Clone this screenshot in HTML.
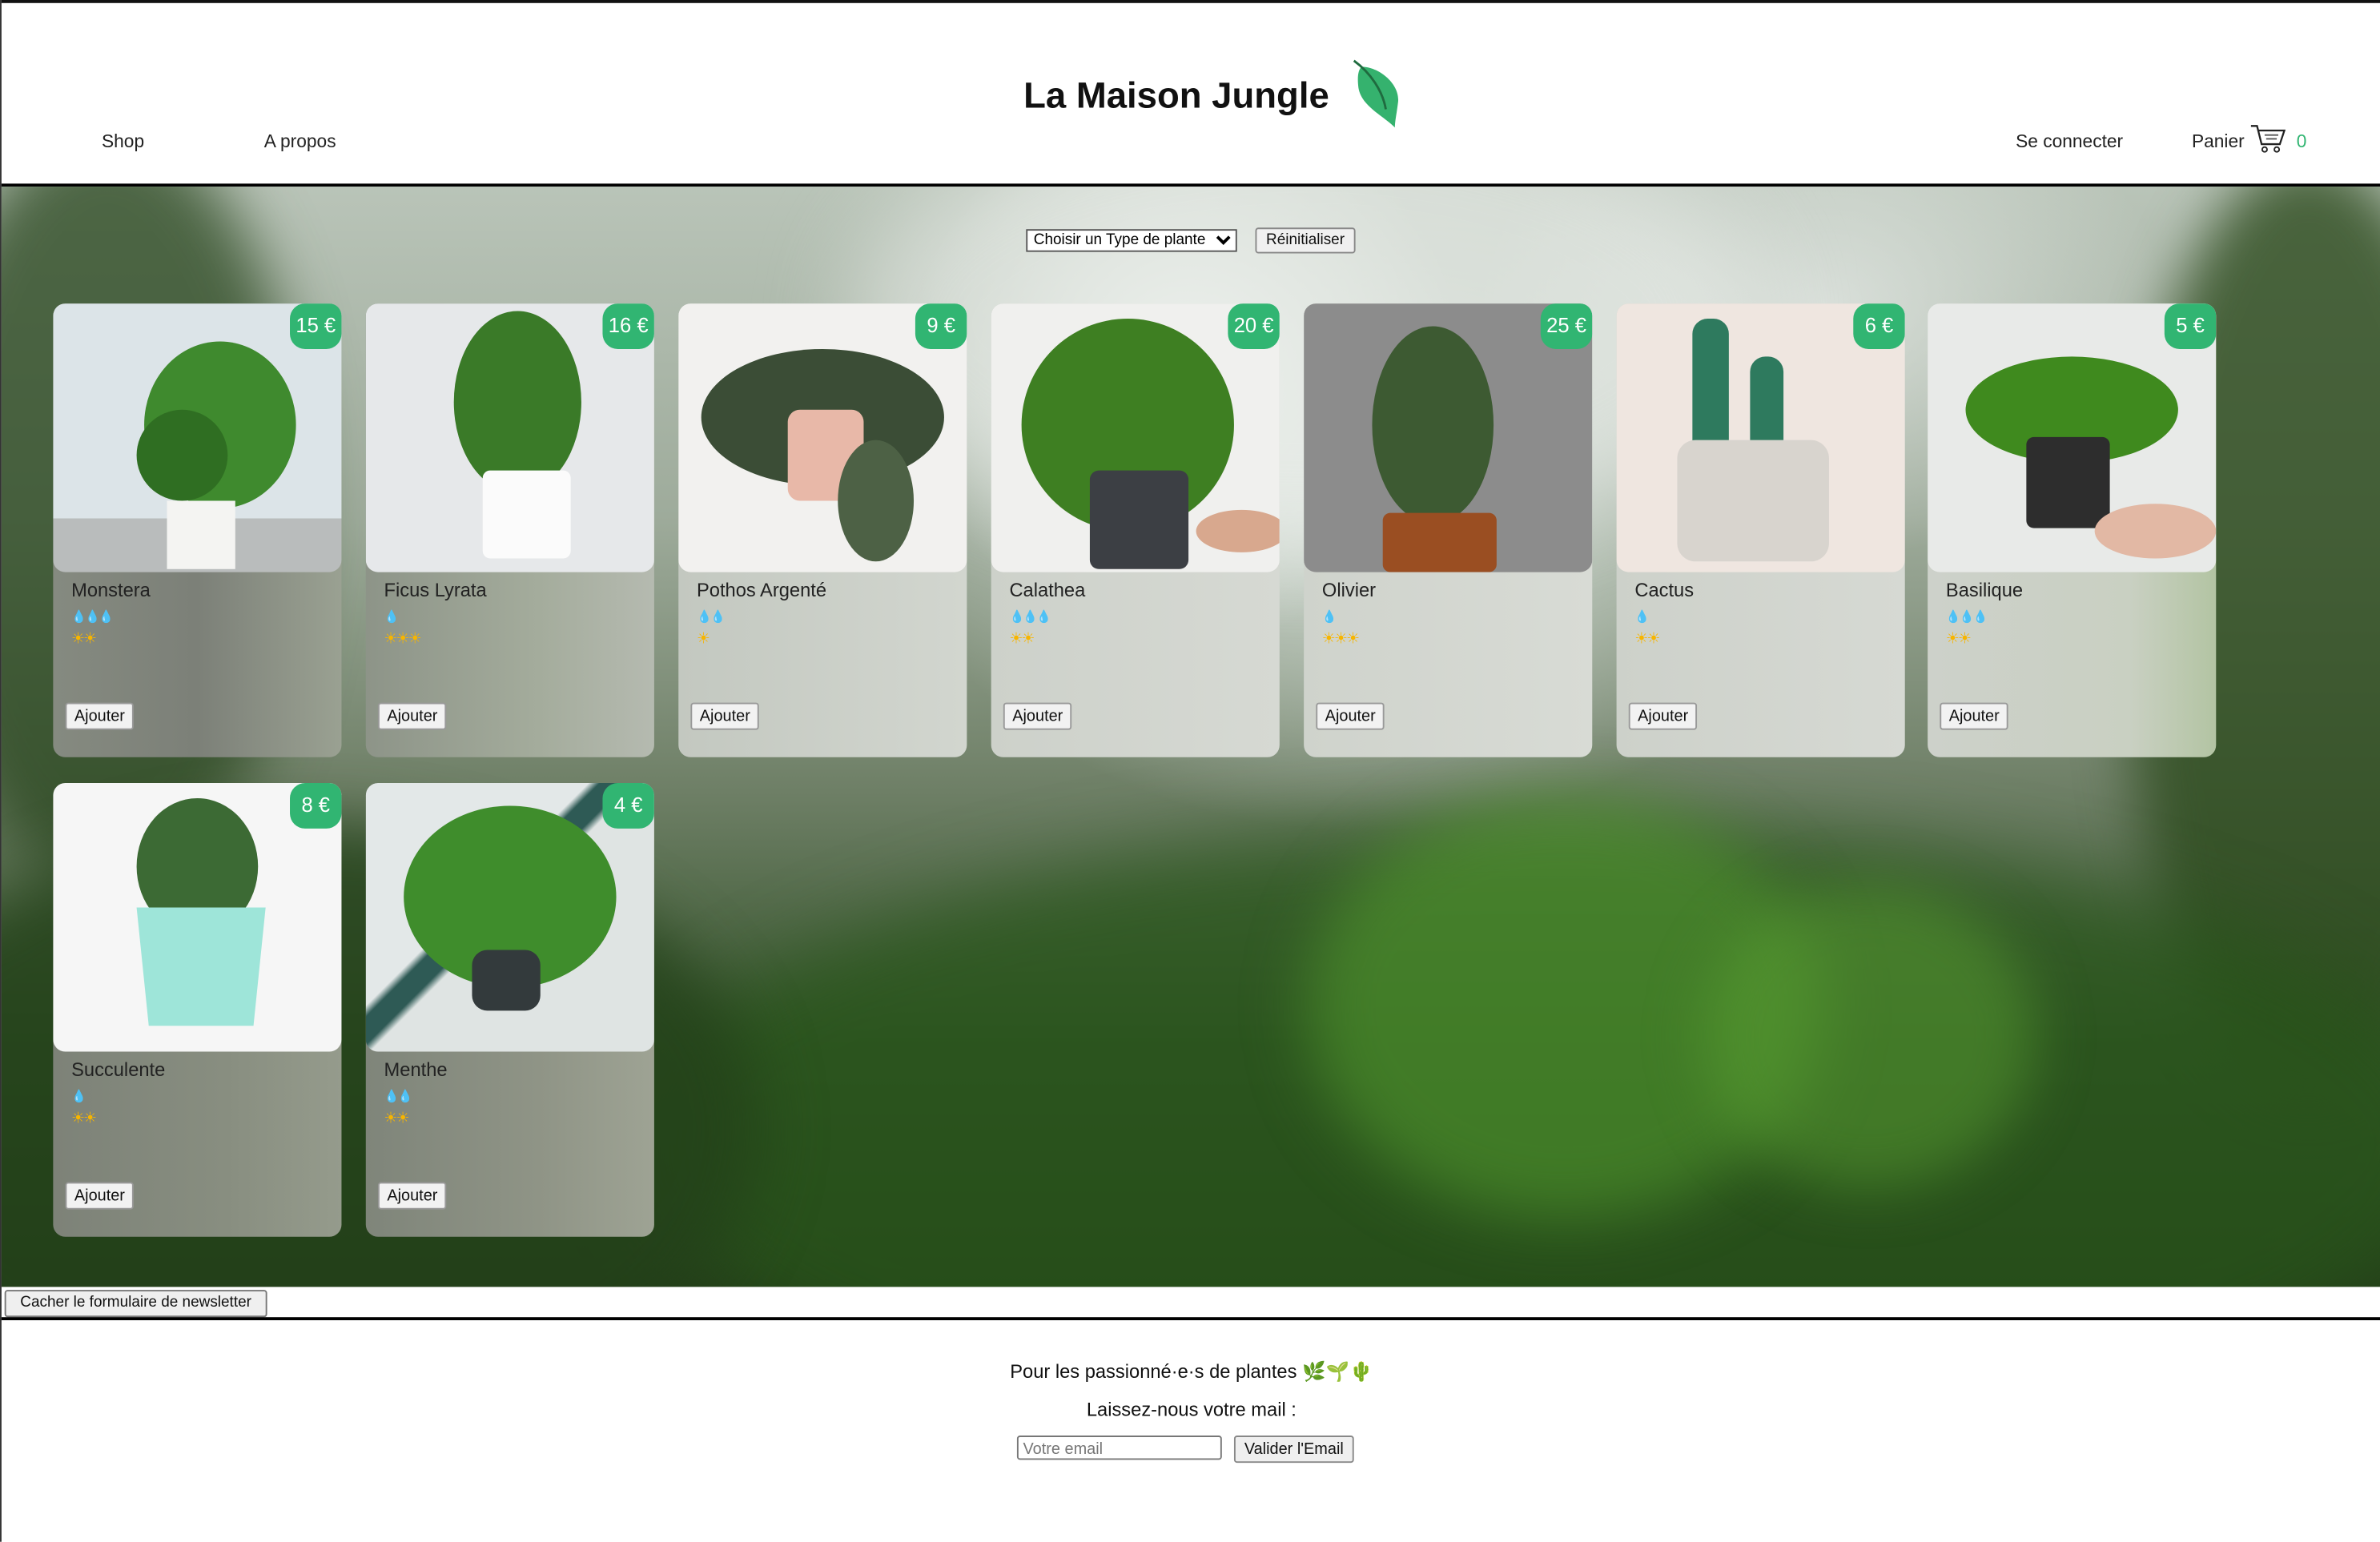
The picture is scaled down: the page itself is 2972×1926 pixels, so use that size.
<!DOCTYPE html>
<html><head><meta charset="utf-8">
<style>
html,body{margin:0;padding:0;width:2972px;height:1925px;overflow:hidden;background:#fff}
#w{position:absolute;left:0;top:0;width:1568px;height:1016px;transform:scale(1.8954);transform-origin:0 0;font-family:"Liberation Sans","DejaVu Sans",sans-serif;background:#fff;border-left:1px solid #333;box-sizing:border-box}
.abs{position:absolute}
#topline{left:0;top:0;width:1568px;height:2px;background:#111}
#title{left:0;width:1548px;top:50px;text-align:center;font-weight:bold;font-size:24px;color:#111}
.nav{top:86px;font-size:12px;color:#222}
#hline{left:0;top:121px;width:1568px;height:2px;background:#000}
#jungle{left:0;top:123px;width:1568px;height:725px;overflow:hidden;
background:
radial-gradient(ellipse 260px 260px at 780px 120px, rgba(240,244,240,.95), rgba(220,228,222,0) 70%),
radial-gradient(ellipse 420px 300px at 900px 200px, rgba(220,228,222,.9), rgba(200,210,200,0) 75%),
radial-gradient(ellipse 300px 220px at 1200px 80px, rgba(225,230,226,.85), rgba(200,210,200,0) 75%),
linear-gradient(180deg,#b9c4b8 0%,#9eab9b 30%,#6e7f66 55%,#34532a 78%,#243d1a 100%);}
.blob{position:absolute;border-radius:50%}
.card{position:absolute;width:190px;height:299px;border-radius:8px;overflow:hidden}
.img{position:absolute;left:0;top:0;width:190px;height:177px;border-radius:8px;overflow:hidden}
.price{position:absolute;right:0;top:0;width:34px;height:30px;background:#31b572;border-radius:10px 8px 10px 10px;color:#fff;font-size:13.5px;text-align:center;line-height:30px}
.name{position:absolute;left:12px;top:182px;font-size:12.5px;color:#222}
.drops{position:absolute;left:12px;top:202px;font-size:8px;color:#4ba3dd;letter-spacing:-1px}
.suns{position:absolute;left:12px;top:216px;font-size:10px;color:#f7b500;letter-spacing:-1px}
.btn{position:absolute;left:8px;top:263px;height:16px;padding:0 5px;background:#f2f2f2;border:1px solid #999;border-radius:2px;font-size:10.5px;line-height:16px;color:#111}
</style></head><body><div id="w">
<div class="abs" id="topline"></div>
<div class="abs" id="title">La Maison Jungle</div>
<svg class="abs" style="left:888px;top:38px" width="36" height="48" viewBox="0 0 36 48"><path d="M8 6 C20 6 34 18 32 30 C31 38 30 42 30 46 C22 38 8 32 6 20 C5 12 6 8 8 6Z" fill="#35b26e"/><path d="M3 2 C14 10 22 22 24 34" stroke="#1f6b3f" stroke-width="1.5" fill="none"/></svg>
<div class="abs nav" style="left:66px">Shop</div>
<div class="abs nav" style="left:173px">A propos</div>
<div class="abs nav" style="left:1327px">Se connecter</div>
<div class="abs nav" style="left:1443px">Panier</div>
<svg class="abs" style="left:1481px;top:82px" width="26" height="20" viewBox="0 0 26 20"><path d="M1 1 H5 L8 13 H20 L23 4 H6" stroke="#222" stroke-width="1.2" fill="none"/><path d="M10 7 H19 M11 9.5 H18" stroke="#555" stroke-width="1"/><circle cx="10" cy="16.5" r="1.6" fill="none" stroke="#222"/><circle cx="18" cy="16.5" r="1.6" fill="none" stroke="#222"/></svg>
<div class="abs nav" style="left:1512px;color:#31b572">0</div>
<div class="abs" id="hline"></div>

<div class="abs" id="jungle">
 <div class="blob" style="left:-60px;top:-40px;width:260px;height:500px;background:rgba(40,70,30,.75);filter:blur(20px)"></div>
 <div class="blob" style="left:1400px;top:-20px;width:240px;height:620px;background:rgba(45,75,30,.8);filter:blur(18px)"></div>
 <div class="blob" style="left:420px;top:420px;width:1200px;height:420px;background:rgba(40,85,25,.7);filter:blur(25px)"></div>
 <div class="blob" style="left:860px;top:400px;width:340px;height:280px;background:rgba(80,150,45,.6);filter:blur(20px)"></div>
 <div class="blob" style="left:1120px;top:460px;width:220px;height:200px;background:rgba(90,160,50,.5);filter:blur(18px)"></div>
 <div class="blob" style="left:-100px;top:420px;width:600px;height:400px;background:rgba(35,65,25,.8);filter:blur(20px)"></div>
 <div class="blob" style="left:560px;top:-60px;width:600px;height:300px;background:rgba(235,238,235,.6);filter:blur(30px)"></div>
</div>

<select class="abs" style="left:675px;top:151px;width:139px;height:15px;font-size:10px;padding:0;font-family:'Liberation Sans',sans-serif;background:#fff;border:1px solid #555"><option>Choisir un Type de plante</option></select>
<div class="abs" style="left:826px;top:150px;width:64px;height:15px;background:#f0f0f0;border:1px solid #888;border-radius:2px;font-size:10px;line-height:15px;text-align:center;color:#111">Réinitialiser</div>

<div class="card" style="left:34px;top:200px;background:linear-gradient(90deg,#858a80,#7c8078 50%,#9aa192)">
 <div class="img" style="background:linear-gradient(#dce4e8 0 80%,#b9bcbc 80%)"><svg width="190" height="177"><ellipse cx="110" cy="80" rx="50" ry="55" fill="#3f8a2e"/><ellipse cx="85" cy="100" rx="30" ry="30" fill="#2f6e22"/><rect x="75" y="130" width="45" height="45" fill="#f4f4f2"/></svg></div>
 <div class="price">15 €</div><div class="name">Monstera</div><div class="drops">💧💧💧</div><div class="suns">☀☀</div><div class="btn">Ajouter</div></div>
<div class="card" style="left:240px;top:200px;background:linear-gradient(90deg,#8d9488,#a4ac9c 60%,#b5bab0)">
 <div class="img" style="background:#e6e8ea"><svg width="190" height="177"><ellipse cx="100" cy="65" rx="42" ry="60" fill="#3a7a28"/><rect x="77" y="110" width="58" height="58" rx="5" fill="#fbfbfb"/></svg></div>
 <div class="price">16 €</div><div class="name">Ficus Lyrata</div><div class="drops">💧</div><div class="suns">☀☀☀</div><div class="btn">Ajouter</div></div>
<div class="card" style="left:446px;top:200px;background:linear-gradient(90deg,#c3c8c0,#d2d6cf)">
 <div class="img" style="background:#f2f1ef"><svg width="190" height="177"><ellipse cx="95" cy="75" rx="80" ry="45" fill="#3b4d36"/><rect x="72" y="70" width="50" height="60" rx="8" fill="#e8b8a8"/><ellipse cx="130" cy="130" rx="25" ry="40" fill="#4d6145"/></svg></div>
 <div class="price">9 €</div><div class="name">Pothos Argenté</div><div class="drops">💧💧</div><div class="suns">☀</div><div class="btn">Ajouter</div></div>
<div class="card" style="left:652px;top:200px;background:linear-gradient(90deg,#cdd1ca,#d6d9d3)">
 <div class="img" style="background:#f0f0ee"><svg width="190" height="177"><ellipse cx="90" cy="80" rx="70" ry="70" fill="#3e7f22"/><rect x="65" y="110" width="65" height="65" rx="6" fill="#3c3f44"/><ellipse cx="165" cy="150" rx="30" ry="14" fill="#d8a88e"/></svg></div>
 <div class="price">20 €</div><div class="name">Calathea</div><div class="drops">💧💧💧</div><div class="suns">☀☀</div><div class="btn">Ajouter</div></div>
<div class="card" style="left:858px;top:200px;background:linear-gradient(90deg,#cfd3cc,#d8dbd5)">
 <div class="img" style="background:#8c8c8c"><svg width="190" height="177"><ellipse cx="85" cy="80" rx="40" ry="65" fill="#3d5a32"/><rect x="52" y="138" width="75" height="39" rx="5" fill="#9a4e22"/></svg></div>
 <div class="price">25 €</div><div class="name">Olivier</div><div class="drops">💧</div><div class="suns">☀☀☀</div><div class="btn">Ajouter</div></div>
<div class="card" style="left:1064px;top:200px;background:linear-gradient(90deg,#cdd1ca,#d6d9d3)">
 <div class="img" style="background:#efe6e0"><svg width="190" height="177"><rect x="50" y="10" width="24" height="90" rx="10" fill="#2e7a5e"/><rect x="88" y="35" width="22" height="70" rx="10" fill="#2e7a5e"/><rect x="40" y="90" width="100" height="80" rx="12" fill="#d8d4ce"/></svg></div>
 <div class="price">6 €</div><div class="name">Cactus</div><div class="drops">💧</div><div class="suns">☀☀</div><div class="btn">Ajouter</div></div>
<div class="card" style="left:1269px;top:200px;background:linear-gradient(90deg,#cdd1ca,#c9d0c2 70%,#b3c4a3)">
 <div class="img" style="background:#e8eae8"><svg width="190" height="177"><ellipse cx="95" cy="70" rx="70" ry="35" fill="#3f8a1e"/><rect x="65" y="88" width="55" height="60" rx="5" fill="#2d2d2d"/><ellipse cx="150" cy="150" rx="40" ry="18" fill="#e2b8a4"/></svg></div>
 <div class="price">5 €</div><div class="name">Basilique</div><div class="drops">💧💧💧</div><div class="suns">☀☀</div><div class="btn">Ajouter</div></div>
<div class="card" style="left:34px;top:516px;background:linear-gradient(90deg,#7d8278,#888e80 60%,#959b8c)">
 <div class="img" style="background:#f6f6f6"><svg width="190" height="177"><ellipse cx="95" cy="55" rx="40" ry="45" fill="#3c6a34"/><path d="M55 82 H140 L132 160 H63Z" fill="#9ee5d9"/></svg></div>
 <div class="price">8 €</div><div class="name">Succulente</div><div class="drops">💧</div><div class="suns">☀☀</div><div class="btn">Ajouter</div></div>
<div class="card" style="left:240px;top:516px;background:linear-gradient(90deg,#7f857a,#8f9486 60%,#9ea394)">
 <div class="img" style="background:linear-gradient(135deg,#e3e8e8 40%,#2e5a55 42%,#2e5a55 47%,#dfe4e3 49%)"><svg width="190" height="177"><ellipse cx="95" cy="75" rx="70" ry="60" fill="#3f8d2c"/><rect x="70" y="110" width="45" height="40" rx="10" fill="#333a3c"/></svg></div>
 <div class="price">4 €</div><div class="name">Menthe</div><div class="drops">💧💧</div><div class="suns">☀☀</div><div class="btn">Ajouter</div></div>

<div class="abs" style="left:2px;top:850px;width:171px;height:16px;background:#efefef;border:1px solid #777;border-radius:2px;font-size:10px;line-height:16px;text-align:center;color:#111">Cacher le formulaire de newsletter</div>
<div class="abs" style="left:0;top:868px;width:1568px;height:2px;background:#000"></div>
<div class="abs" style="left:0;width:1568px;top:897px;text-align:center;font-size:12.5px;color:#111">Pour les passionné·e·s de plantes <span style="color:#5a9e2a">🌿🌱🌵</span></div>
<div class="abs" style="left:0;width:1568px;top:922px;text-align:center;font-size:12.5px;color:#111">Laissez-nous votre mail :</div>
<div class="abs" style="left:669px;top:946px;width:135px;height:16px;border:1px solid #777;border-radius:2px;background:#fff;font-size:10.5px;line-height:16px;color:#777;padding-left:3px;box-sizing:border-box">Votre email</div>
<div class="abs" style="left:812px;top:946px;width:77px;height:16px;border:1px solid #888;border-radius:2px;background:#efefef;font-size:10.5px;line-height:16px;text-align:center;color:#111">Valider l'Email</div>
</div></body></html>
